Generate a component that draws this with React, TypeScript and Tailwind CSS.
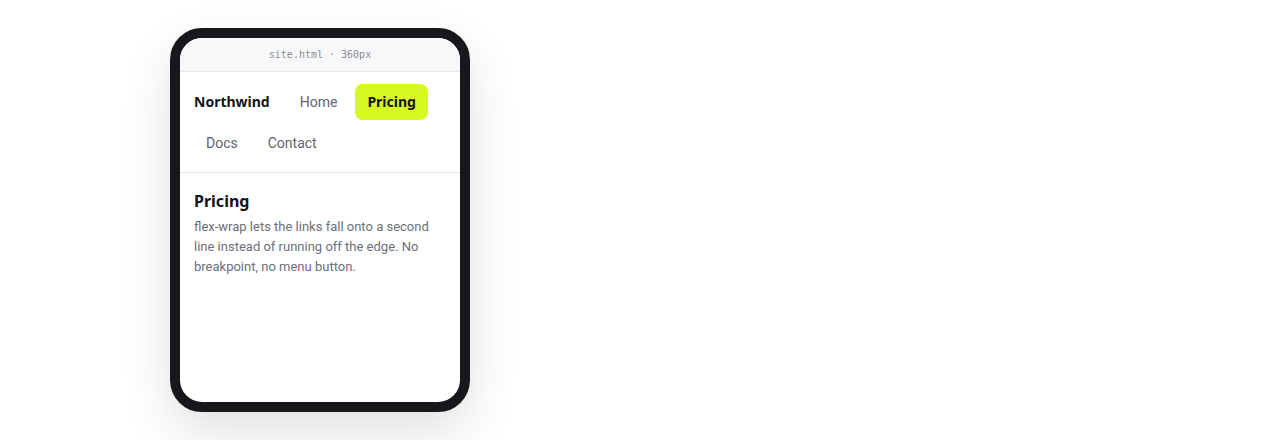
export default function App() {
  const links = [
    { label: "Home", active: false },
    { label: "Pricing", active: true },
    { label: "Docs", active: false },
    { label: "Contact", active: false },
  ];

  return (
    <div className="min-h-[440px] w-full bg-white pl-[170px] pt-[28px] font-['Roboto',sans-serif]">
      {/* device frame */}
      <div className="w-[300px] h-[384px] rounded-[32px] border-[10px] border-[#16181b] bg-white overflow-hidden shadow-[0_20px_50px_rgba(0,0,0,0.12)] flex flex-col">
        <div className="h-[34px] shrink-0 bg-[#f7f8fa] border-b border-[#e5e7eb] flex items-center justify-center">
          <span className="font-['DejaVu_Sans_Mono',monospace] text-[10px] text-[#8a8d91]">
            site.html · 360px
          </span>
        </div>

        <nav className="flex flex-wrap items-center gap-x-1.5 gap-y-[5px] px-3.5 pt-3 pb-[11px] border-b border-[#e5e7eb]">
          <span className="mr-3 font-['Noto_Sans',sans-serif] text-sm font-bold text-[#111318]">
            Northwind
          </span>
          {links.map((l) => (
            <a
              key={l.label}
              className={
                l.active
                  ? "rounded-lg bg-[#d7f91f] px-3 py-2 font-['Noto_Sans',sans-serif] text-sm font-bold leading-5 text-[#111318]"
                  : "rounded-lg px-3 py-2 text-sm leading-5 text-[#5f6570]"
              }
            >
              {l.label}
            </a>
          ))}
        </nav>

        <main className="px-3.5 pt-4">
          <h2 className="font-['Noto_Sans',sans-serif] text-base font-bold leading-6 text-[#111318]">
            Pricing
          </h2>
          <p className="mt-1 text-[13px] leading-5 text-[#6b7079]">
            flex-wrap lets the links fall onto a second line instead of running off the edge. No
            breakpoint, no menu button.
          </p>
        </main>
      </div>
    </div>
  );
}
